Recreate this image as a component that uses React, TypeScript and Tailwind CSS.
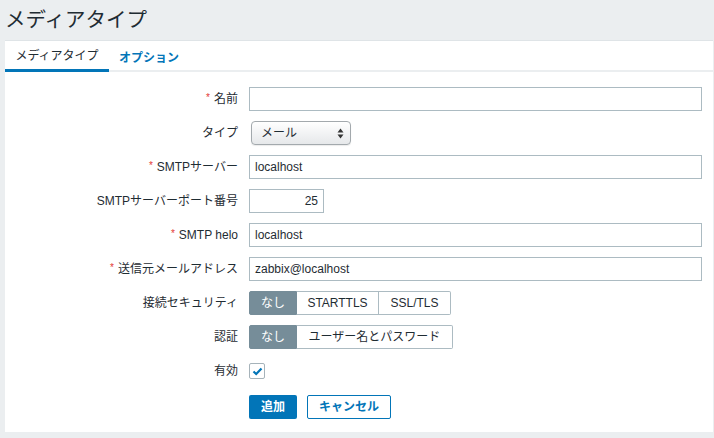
import React from 'react';

const font = { fontFamily: '"Liberation Sans", "Noto Sans CJK JP", sans-serif' };

function Label({ text, required }: { text: string; required?: boolean }) {
  return (
    <div className="flex items-center justify-end h-6 pr-[1px] text-[12px] text-[#1f2c33]">
      {required && <span className="text-[#e33734] text-[10px] mr-[4px] -mt-[4px]">*</span>}
      <span>{text}</span>
    </div>
  );
}

function TextInput({ value, width = 'w-[453px]', right }: { value?: string; width?: string; right?: boolean }) {
  return (
    <div
      className={`${width} h-6 border border-[#acbbc2] bg-white flex items-center px-[5px] text-[12px] text-[#1f2c33] ${
        right ? 'justify-end' : ''
      }`}
    >
      {value}
    </div>
  );
}

function Segmented({ items }: { items: { text: string; w: string }[] }) {
  return (
    <div className="flex h-6 text-[12px]">
      {items.map((item, i) => (
        <div
          key={item.text}
          className={
            i === 0
              ? `h-6 ${item.w} flex items-center justify-center bg-[#768d99] border border-[#768d99] text-white rounded-l-[2px]`
              : `h-6 ${item.w} flex items-center justify-center border border-[#acbbc2] border-l-0 text-[#1f2c33] bg-white ${
                  i === items.length - 1 ? 'rounded-r-[2px]' : ''
                }`
          }
        >
          {item.text}
        </div>
      ))}
    </div>
  );
}

export default function App() {
  const rows: { label: string; required?: boolean; field: React.ReactNode }[] = [
    { label: '名前', required: true, field: <TextInput /> },
    {
      label: 'タイプ',
      field: (
        <div className="ml-[2px] w-[100px] h-6 rounded-[4px] border border-[#a3a9ad] bg-gradient-to-b from-white to-[#e6e8ea] flex items-center justify-between pl-[9px] pr-[6px] text-[12px] text-[#1f2c33] shadow-[0_1px_1px_rgba(0,0,0,0.08)]">
          <span>メール</span>
          <svg width="7" height="11" viewBox="0 0 7 11">
            <path d="M3.5 0.5 L6.5 4.5 H0.5 Z" fill="#333" />
            <path d="M3.5 10.5 L6.5 6.5 H0.5 Z" fill="#333" />
          </svg>
        </div>
      ),
    },
    { label: 'SMTPサーバー', required: true, field: <TextInput value="localhost" /> },
    { label: 'SMTPサーバーポート番号', field: <TextInput value="25" width="w-[75px]" right /> },
    { label: 'SMTP helo', required: true, field: <TextInput value="localhost" /> },
    { label: '送信元メールアドレス', required: true, field: <TextInput value="zabbix@localhost" /> },
    {
      label: '接続セキュリティ',
      field: (
        <Segmented
          items={[
            { text: 'なし', w: 'w-[48px]' },
            { text: 'STARTTLS', w: 'w-[82px]' },
            { text: 'SSL/TLS', w: 'w-[72px]' },
          ]}
        />
      ),
    },
    {
      label: '認証',
      field: (
        <Segmented
          items={[
            { text: 'なし', w: 'w-[48px]' },
            { text: 'ユーザー名とパスワード', w: 'w-[156px]' },
          ]}
        />
      ),
    },
    {
      label: '有効',
      field: (
        <div className="w-[16px] h-[16px] border border-[#a6b3ba] rounded-[2px] bg-white flex items-center justify-center">
          <svg width="11" height="9" viewBox="0 0 11 9">
            <path d="M1.5 4.5 L4.2 7 L9.5 1.5" stroke="#0275b8" strokeWidth="2.2" fill="none" />
          </svg>
        </div>
      ),
    },
  ];

  return (
    <div className="w-[714px] h-[438px] bg-[#ebeef0] overflow-hidden" style={font}>
      <div className="h-[40px] flex items-center pl-[5px]">
        <h1 className="text-[20.5px] text-[#1f2c33] leading-none mt-[1px]">メディアタイプ</h1>
      </div>
      <div className="ml-[5px] mr-[1px] h-[392px] bg-white border-t border-[#dfe4e7]">
        <div className="flex h-[31px] border-b-2 border-[#ebeef0] text-[12px]">
          <div className="w-[104px] h-[31px] flex items-center justify-center border-b-[3px] border-[#0275b8] text-[#1f2c33] -mb-[2px] pt-[2px]">
            メディアタイプ
          </div>
          <div className="px-[10px] h-[31px] flex items-center text-[#0275b8] font-bold pt-[2px]">オプション</div>
        </div>
        <div className="grid grid-cols-[234px_auto] gap-x-[10px] gap-y-[10px] pt-[15px] items-center">
          {rows.map((r) => (
            <React.Fragment key={r.label}>
              <Label text={r.label} required={r.required} />
              <div className="flex items-center h-6">{r.field}</div>
            </React.Fragment>
          ))}
          <div />
          <div className="flex gap-[10px] mt-[2px]">
            <div className="w-[48px] h-6 bg-[#0275b8] rounded-[2px] text-white text-[12px] font-bold flex items-center justify-center">
              追加
            </div>
            <div className="w-[84px] h-6 border border-[#0275b8] rounded-[2px] text-[#0275b8] text-[12px] font-bold flex items-center justify-center">
              キャンセル
            </div>
          </div>
        </div>
      </div>
    </div>
  );
}
